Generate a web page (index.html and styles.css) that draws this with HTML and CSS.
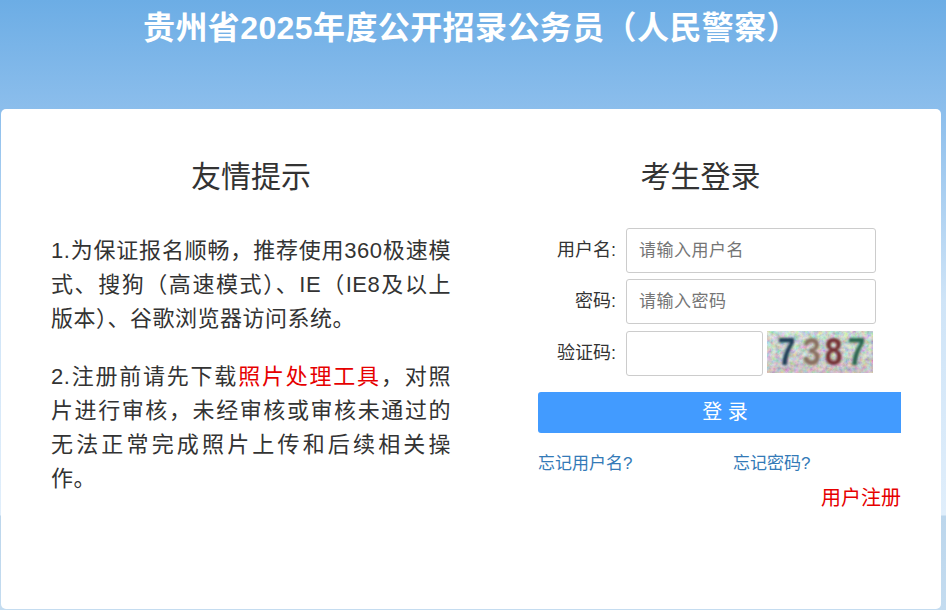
FILE: index.html
```html
<!DOCTYPE html>
<html lang="zh-CN">
<head>
<meta charset="utf-8">
<title>考生登录</title>
<link rel="stylesheet" href="styles.css">
</head>
<body>
<div class="page">
  <h1 class="title">贵州省2025年度公开招录公务员（人民警察）</h1>
  <main class="card">
    <section class="tips">
      <h2 class="heading">友情提示</h2>
      <p class="tip">1.为保证报名顺畅，推荐使用360极速模式、搜狗（高速模式）、IE（IE8及以上<span class="keep">版本）、谷歌</span>浏览器访问系统。</p>
      <p class="tip">2.注册前请先下载<a class="tool" href="#">照片处理工具</a>，对照片进行审核，未经审核或审核未通过的无法正常完成照片上传和后续相关操作。</p>
    </section>
    <section class="login">
      <h2 class="heading heading-login">考生登录</h2>
      <form class="form">
        <div class="row">
          <label class="label">用户名:</label>
          <input class="input" type="text" placeholder="请输入用户名">
        </div>
        <div class="row">
          <label class="label">密码:</label>
          <input class="input" type="password" placeholder="请输入密码">
        </div>
        <div class="row row-code">
          <label class="label">验证码:</label>
          <input class="input input-code" type="text">
          <svg class="captcha" width="106" height="42" viewBox="0 0 106 42">
            <defs>
              <filter id="noise" x="0" y="0" width="100%" height="100%">
                <feTurbulence type="fractalNoise" baseFrequency="0.22" numOctaves="3" seed="11"/>
                <feColorMatrix type="matrix" values="1.15 0 0 0 0.1  0 1.15 0 0 0.12  0 0 1.15 0 0.1  0 0 0 0 1"/>
                <feGaussianBlur stdDeviation="0.6"/>
              </filter>
              <linearGradient id="tint" x1="0" y1="0" x2="0" y2="1">
                <stop offset="0" stop-color="#9fd8c0" stop-opacity=".25"/>
                <stop offset="1" stop-color="#b08a9c" stop-opacity=".35"/>
              </linearGradient>
              <filter id="soft"><feGaussianBlur stdDeviation="0.85"/></filter>
            </defs>
            <rect width="106" height="42" filter="url(#noise)"/>
            <rect width="106" height="42" fill="url(#tint)"/>
            <g class="digits" filter="url(#soft)">
              <text transform="translate(19.5 34) scale(.8 1)" fill="#1d3d57">7</text>
              <text transform="translate(44.5 34) scale(.8 1)" fill="#8a7060">3</text>
              <text transform="translate(66.5 34) scale(.8 1)" fill="#743034">8</text>
              <text transform="translate(89.5 34) scale(.8 1)" fill="#2c6650">7</text>
            </g>
          </svg>
        </div>
        <button class="submit" type="button">登 录</button>
        <div class="links">
          <a class="link" href="#">忘记用户名?</a>
          <a class="link" href="#">忘记密码?</a>
        </div>
        <div class="register"><a class="register-link" href="#">用户注册</a></div>
      </form>
    </section>
  </main>
</div>
</body>
</html>
```
FILE: styles.css
```css
* { box-sizing: border-box; }
html, body { margin: 0; height: 100%; }
body {
  font-family: "Liberation Sans", "Noto Sans CJK SC", sans-serif;
  color: #333;
  overflow: hidden;
}
.page {
  width: 946px;
  height: 610px;
  padding: 0 5px 1px 1px;
  display: flex;
  flex-direction: column;
  background: linear-gradient(#6cade5 0, #8cbeec 110px, #cfe4f7 300px, #e0eefb 515px, #bcd6ec 516px, #c4dcf0 610px);
}
.title {
  margin: 0;
  height: 109px;
  padding: 8px 0 0;
  font-size: 32px;
  letter-spacing: .4px;
  line-height: 40px;
  font-weight: 700;
  color: #fff;
  text-align: center;
}
.card {
  flex: 1;
  background: #fff;
  border-radius: 5px;
  display: flex;
  padding: 0 0 0 50px;
}
.tips { width: 400px; }
.heading {
  margin: 0;
  padding-top: 48px;
  height: 105px;
  font-size: 30px;
  line-height: 40px;
  font-weight: 400;
  text-align: center;
  color: #333;
}
.heading-login { padding-right: 38px; }
.tip {
  margin: 20px 0 23px;
  font-size: 22px;
  letter-spacing: .5px;
  line-height: 34.2px;
  text-align: justify;
}
.keep { white-space: nowrap; }
.tool { color: #e60000; text-decoration: none; }
.login {
  margin-left: 87px;
  width: 363px;
}
.form { margin-top: 14px; }
.row {
  display: flex;
  align-items: flex-start;
  margin-bottom: 6px;
  height: 45px;
}
.row-code { margin-top: 7px; }
.label {
  width: 88px;
  padding-right: 10px;
  text-align: right;
  font-size: 18px;
  line-height: 44px;
  color: #333;
}
.input {
  width: 250px;
  height: 45px;
  padding: 6px 12px;
  border: 1px solid #ccc;
  border-radius: 3px;
  font: 17px "Liberation Sans", "Noto Sans CJK SC", sans-serif;
  letter-spacing: .5px;
  color: #555;
  background: #fff;
  outline: none;
}
.input::placeholder { color: #757575; opacity: 1; }
.input-code { width: 137px; }
.captcha { margin: 0 0 0 4px; display: block; flex: none; overflow: visible; }
.digits {
  font-family: "Liberation Mono", monospace;
  font-weight: 700;
  font-size: 40px;
  text-anchor: middle;
}
.submit {
  display: block;
  width: 363px;
  height: 41px;
  margin-top: 16px;
  border: 0;
  border-radius: 3px 0 0 3px;
  background: #429bff;
  color: #fff;
  font: 20px/41px "Liberation Sans", "Noto Sans CJK SC", sans-serif;
  padding: 0 0 0 11px;
}
.links {
  display: flex;
  margin-top: 19px;
  height: 24px;
}
.link {
  flex: none;
  width: 195px;
  font-size: 17px;
  line-height: 24px;
  color: #337ab7;
  text-decoration: none;
}
.register { text-align: right; height: 24px; margin-top: 10px; }
.register-link {
  font-size: 20px;
  line-height: 24px;
  color: #e60000;
  text-decoration: none;
}
```
